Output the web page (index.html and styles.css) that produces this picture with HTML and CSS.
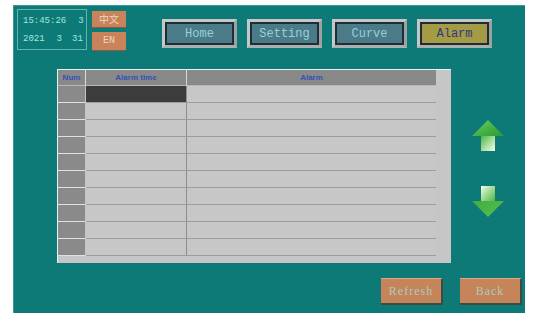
FILE: index.html
```html
<!DOCTYPE html>
<html>
<head>
<meta charset="utf-8">
<link rel="stylesheet" href="styles.css">
</head>
<body>
<div class="panel">
  <div class="header">
    <div class="clock">
      <div class="clock-line"><span>15:45:26</span><span>3</span></div>
      <div class="clock-line"><span>2021</span><span>3</span><span>31</span></div>
    </div>
    <div class="lang">
      <div class="lang-btn cn">中文</div>
      <div class="lang-btn en">EN</div>
    </div>
    <div class="nav">
      <div class="nav-btn"><div class="nav-inner">Home</div></div>
      <div class="nav-btn"><div class="nav-inner">Setting</div></div>
      <div class="nav-btn"><div class="nav-inner">Curve</div></div>
      <div class="nav-btn active"><div class="nav-inner">Alarm</div></div>
    </div>
  </div>
  <div class="main">
    <div class="table">
      <div class="grid">
        <div class="th num">Num</div>
        <div class="th time">Alarm time</div>
        <div class="th alarm">Alarm</div>
        <div class="td num"></div><div class="td time sel"></div><div class="td alarm"></div>
        <div class="td num"></div><div class="td time"></div><div class="td alarm"></div>
        <div class="td num"></div><div class="td time"></div><div class="td alarm"></div>
        <div class="td num"></div><div class="td time"></div><div class="td alarm"></div>
        <div class="td num"></div><div class="td time"></div><div class="td alarm"></div>
        <div class="td num"></div><div class="td time"></div><div class="td alarm"></div>
        <div class="td num"></div><div class="td time"></div><div class="td alarm"></div>
        <div class="td num"></div><div class="td time"></div><div class="td alarm"></div>
        <div class="td num"></div><div class="td time"></div><div class="td alarm"></div>
        <div class="td num"></div><div class="td time"></div><div class="td alarm"></div>
      </div>
    </div>
    <div class="arrows">
      <svg class="arrow up" width="32" height="31" viewBox="0 0 32 31">
        <defs>
          <linearGradient id="gu" x1="0" y1="0" x2="1" y2="1">
            <stop offset="0" stop-color="#6fd266"/>
            <stop offset="0.6" stop-color="#3fae40"/>
            <stop offset="1" stop-color="#2f9a36"/>
          </linearGradient>
          <linearGradient id="su" x1="0" y1="0" x2="1" y2="1">
            <stop offset="0" stop-color="#4cb846"/>
            <stop offset="0.6" stop-color="#b4e4a8"/>
            <stop offset="1" stop-color="#f4fff0"/>
          </linearGradient>
        </defs>
        <polygon points="16,0 32,16 0,16" fill="url(#gu)"/>
        <rect x="9" y="16" width="14" height="15" fill="url(#su)"/>
      </svg>
      <svg class="arrow down" width="32" height="31" viewBox="0 0 32 31">
        <defs>
          <linearGradient id="gd" x1="0" y1="0" x2="1" y2="1">
            <stop offset="0" stop-color="#3fae40"/>
            <stop offset="1" stop-color="#55c04e"/>
          </linearGradient>
          <linearGradient id="sd" x1="0" y1="0" x2="1" y2="1">
            <stop offset="0" stop-color="#f4fff0"/>
            <stop offset="0.45" stop-color="#a8dc9c"/>
            <stop offset="1" stop-color="#4cb846"/>
          </linearGradient>
        </defs>
        <rect x="9" y="0" width="14" height="15" fill="url(#sd)"/>
        <polygon points="0,15 32,15 16,31" fill="url(#gd)"/>
      </svg>
    </div>
  </div>
  <div class="footer">
    <div class="act-btn">Refresh</div>
    <div class="act-btn">Back</div>
  </div>
</div>
</body>
</html>
```
FILE: styles.css
```css
html, body {
  margin: 0;
  padding: 0;
  background: #ffffff;
}
body {
  width: 543px;
  height: 326px;
  overflow: hidden;
  font-family: "Liberation Mono", "DejaVu Sans Mono", monospace;
}
.panel {
  margin: 5px 0 0 13px;
  width: 512px;
  height: 308px;
  background: #0e7a77;
  box-sizing: border-box;
  box-shadow: inset 1px 1px 0 #3a9a96;
  display: flex;
  flex-direction: column;
}
.header {
  height: 64px;
  box-sizing: border-box;
  padding: 4px 0 0 4px;
  display: flex;
  align-items: flex-start;
}
.clock {
  width: 70px;
  height: 41px;
  box-sizing: border-box;
  border: 1px solid #5fb6ae;
  color: #a6e6dc;
  font-size: 9px;
  padding: 6px 0 0 5px;
  display: flex;
  flex-direction: column;
  gap: 8px;
}
.clock-line {
  display: flex;
  gap: 10px;
}
.clock-line span:first-child {
  margin-right: 2px;
}
.lang {
  margin: 2px 0 0 5px;
  display: flex;
  flex-direction: column;
  gap: 4px;
}
.lang-btn {
  width: 34px;
  box-sizing: border-box;
  background: #c9835a;
  color: #eed6bf;
  font-size: 10px;
  text-align: center;
  border-bottom: 1px solid #8a5a3c;
}
.lang-btn.cn {
  height: 17px;
  line-height: 16px;
  font-family: "Noto Sans CJK SC", sans-serif;
}
.lang-btn.en {
  height: 19px;
  line-height: 18px;
}
.nav {
  margin: 10px 0 0 36px;
  display: flex;
  gap: 10px;
}
.nav-btn {
  width: 75px;
  height: 29px;
  box-sizing: border-box;
  border: 3px solid #c4c8c8;
  border-right-color: #9aa2a2;
  border-bottom-color: #a8b0b0;
  background: #1e2e34;
  padding: 2px;
}
.nav-inner {
  height: 100%;
  background: #4b7b89;
  color: #94d2da;
  font-size: 12px;
  display: flex;
  align-items: center;
  justify-content: center;
}
.nav-btn.active .nav-inner {
  background: #a59a46;
  color: #2b3a7c;
}
.main {
  height: 194px;
  display: flex;
}
.table {
  margin-left: 44px;
  width: 394px;
  height: 194px;
  box-sizing: border-box;
  background: #c6c6c6;
  border-left: 1px solid #e8f4f2;
  border-top: 1px solid #e8f4f2;
}
.grid {
  display: grid;
  grid-template-columns: 28px 101px 249px;
  grid-template-rows: 16px repeat(10, 17px);
}
.th {
  background: #898989;
  color: #3452b4;
  font-family: "Liberation Sans", Arial, sans-serif;
  font-size: 8px;
  font-weight: bold;
  display: flex;
  align-items: center;
  justify-content: center;
  border-right: 1px solid #d8d8d8;
  border-bottom: 1px solid #b8b8b8;
  box-sizing: border-box;
}
.th.alarm {
  border-right: none;
}
.td {
  box-sizing: border-box;
  background: #c7c7c7;
  border-bottom: 1px solid #9c9c9c;
}
.td.num {
  background: #8a8a8a;
  border-right: 1px solid #c4c4c4;
  border-bottom: 1px solid #e0e0e0;
}
.td.time {
  border-right: 1px solid #8e8e8e;
}
.td.sel {
  background: #3c3c3c;
}
.arrows {
  margin-left: 21px;
  display: flex;
  flex-direction: column;
  padding-top: 51px;
  gap: 35px;
}
.arrow {
  display: block;
}
.footer {
  height: 50px;
  display: flex;
  justify-content: flex-end;
  align-items: flex-start;
  padding: 15px 3px 0 0;
  box-sizing: border-box;
  gap: 17px;
}
.act-btn {
  width: 62px;
  height: 27px;
  box-sizing: border-box;
  background: #c6845a;
  border-top: 1px solid #e0a882;
  border-right: 2px solid #3c4a44;
  border-bottom: 2px solid #3c4a44;
  color: #a9ccbc;
  font-family: "Liberation Serif", serif;
  font-size: 12px;
  letter-spacing: 1px;
  display: flex;
  align-items: center;
  justify-content: center;
}
```
